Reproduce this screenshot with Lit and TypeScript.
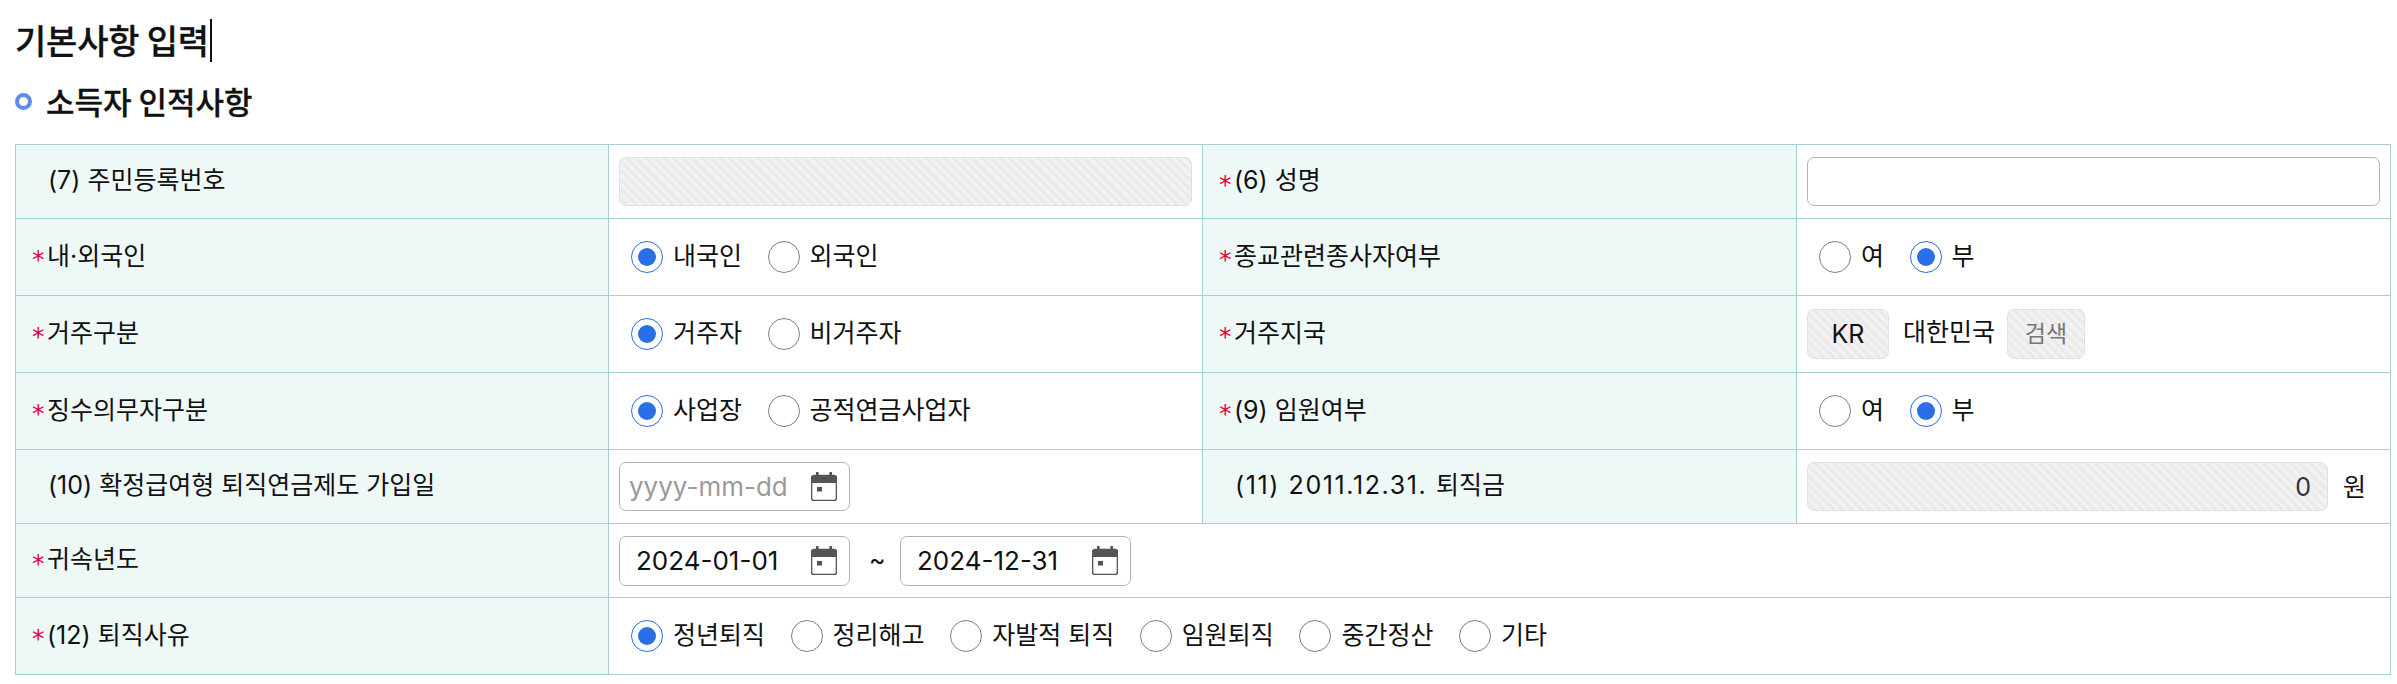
import { LitElement, html, css } from "lit";
import { customElement } from "lit/decorators.js";

type Opt = [string, boolean];

@customElement("app-root")
export class AppRoot extends LitElement {
  static styles = css`
    :host { display: block; width: 2397px; height: 684px; background: #fff; overflow: hidden; color: #111;
      font-family: "Inter", "Noto Sans CJK KR", sans-serif; font-size: 25px; line-height: 34px; box-sizing: border-box; padding: 18px 0 0 15px; }
    * { box-sizing: border-box; }
    .title { display: flex; align-items: center; height: 44px; font-size: 34px; line-height: 44px; color: #111; letter-spacing: -0.2px; font-family: "Noto Sans CJK KR", sans-serif; font-weight: 500; -webkit-text-stroke: 0.3px #111; }
    .caret { width: 2px; height: 43px; background: #111; margin-left: 1px; }
    .section { display: flex; align-items: center; gap: 14px; height: 40px; margin-top: 19px; margin-bottom: 23px; font-size: 31px; line-height: 40px; color: #111; font-family: "Noto Sans CJK KR", sans-serif; font-weight: 500; -webkit-text-stroke: 0.3px #111; }
    .bullet { width: 17px; height: 17px; border-radius: 50%; border: 4.5px solid #5b8def; flex: none; }
    .grid { display: grid; width: 2376px; grid-template-columns: 593px 594px 594px 594px;
      grid-template-rows: 74px 77px 77px 77px 74px 74px 77px; border-top: 1px solid #a8cfd5; border-left: 1px solid #a8cfd5; }
    .th, .td { display: flex; align-items: center; border-right: 1px solid #a8cfd5; border-bottom: 1px solid #a8cfd5; white-space: nowrap; }
    .th { background: #eef8f6; padding: 0 0 3px 32px; }
    .th.req { padding-left: 16px; }
    .star { width: 15px; color: #e8003d; font-family: "DejaVu Sans", sans-serif; font-size: 25px; line-height: 1; padding-top: 8px; flex: none; }
    .spaced { letter-spacing: 1.6px; white-space: pre; }
    .td { padding: 0 10px 0 10px; }
    .wide { grid-column: 2 / 5; }
    .radios { display: flex; align-items: center; gap: 25.6px; padding-left: 12px; }
    .radio { display: flex; align-items: center; gap: 10px; }
    .radio-text { padding-bottom: 2px; }
    .dot { width: 32px; height: 32px; border-radius: 50%; border: 1.5px solid #808080; background: #fff; flex: none; display: flex; align-items: center; justify-content: center; }
    .dot.on { border-color: #2a6fe8; }
    .dot.on::after { content: ""; width: 18px; height: 18px; border-radius: 50%; background: #2a6fe8; }
    .input { height: 49px; border: 1px solid #b5b5b5; border-radius: 7px; background: #fff; display: flex; align-items: center; }
    .full { flex: 1; }
    .hatch { border-color: #e0e0e6; background: repeating-linear-gradient(45deg, #f2f2f2 0 3.3px, #ecebec 3.3px 6.6px); }
    .num { justify-content: flex-end; padding-right: 16px; color: #333; }
    .unit { margin-left: 15px; margin-right: 14px; color: #111; }
    .kr { width: 82px; height: 50px; justify-content: center; }
    .name { margin-left: 14px; padding-bottom: 4px; }
    .btn { width: 78px; height: 50px; justify-content: center; margin-left: 12px; color: #777; font-size: 23px; }
    .date { width: 231px; padding: 0 12px 0 9px; justify-content: space-between; font-size: 26px; }
    .date.val { height: 50px; padding-left: 16px; color: #111; }
    .ph { color: #9a9a9a; }
    .tilde { margin: 0 23px 0 19px; width: 8px; text-align: center; line-height: 1; }
    svg { display: block; flex: none; }
  `;

  private label(text: string, req = false) {
    return html`<div class="th ${req ? "req" : ""}">${req ? html`<span class="star">*</span>` : ""}<span>${text}</span></div>`;
  }

  private radio([t, on]: Opt) {
    return html`<div class="radio"><span class="dot ${on ? "on" : ""}"></span><span class="radio-text">${t}</span></div>`;
  }

  private radios(opts: Opt[], wide = false) {
    return html`<div class="td ${wide ? "wide" : ""}"><div class="radios">${opts.map((o) => this.radio(o))}</div></div>`;
  }

  private cal() {
    return html`<svg width="26" height="29" viewBox="0 0 26 29" fill="none">
      <rect x="5" y="0" width="2.6" height="6" fill="#555"/><rect x="18.4" y="0" width="2.6" height="6" fill="#555"/>
      <path d="M3 3.5h20a2.5 2.5 0 0 1 2.5 2.5v20a2.5 2.5 0 0 1-2.5 2.5H3A2.5 2.5 0 0 1 .5 26V6A2.5 2.5 0 0 1 3 3.5z" stroke="#555" stroke-width="1.6" fill="#fff"/>
      <path d="M.5 6A2.5 2.5 0 0 1 3 3.5h20A2.5 2.5 0 0 1 25.5 6v5H.5z" fill="#555"/>
      <rect x="6" y="15" width="5" height="4.5" fill="#555"/>
    </svg>`;
  }

  private date(v: string | null) {
    return html`<div class="input date ${v ? "val" : ""}"><span class="${v ? "" : "ph"}">${v ?? "yyyy-mm-dd"}</span>${this.cal()}</div>`;
  }

  render() {
    return html`
      <div class="title"><span>기본사항 입력</span><span class="caret"></span></div>
      <div class="section"><span class="bullet"></span><span>소득자 인적사항</span></div>
      <div class="grid">
        ${this.label("(7) 주민등록번호")}
        <div class="td"><div class="input full hatch"></div></div>
        ${this.label("(6) 성명", true)}
        <div class="td"><div class="input full"></div></div>

        ${this.label("내·외국인", true)}
        ${this.radios([["내국인", true], ["외국인", false]])}
        ${this.label("종교관련종사자여부", true)}
        ${this.radios([["여", false], ["부", true]])}

        ${this.label("거주구분", true)}
        ${this.radios([["거주자", true], ["비거주자", false]])}
        ${this.label("거주지국", true)}
        <div class="td"><div class="input hatch kr">KR</div><span class="name">대한민국</span><div class="input hatch btn">검색</div></div>

        ${this.label("징수의무자구분", true)}
        ${this.radios([["사업장", true], ["공적연금사업자", false]])}
        ${this.label("(9) 임원여부", true)}
        ${this.radios([["여", false], ["부", true]])}

        ${this.label("(10) 확정급여형 퇴직연금제도 가입일")}
        <div class="td">${this.date(null)}</div>
        <div class="th"><span class="spaced">(11) 2011.12.31. </span><span>퇴직금</span></div>
        <div class="td"><div class="input full hatch num">0</div><span class="unit">원</span></div>

        ${this.label("귀속년도", true)}
        <div class="td wide">${this.date("2024-01-01")}<span class="tilde">~</span>${this.date("2024-12-31")}</div>

        ${this.label("(12) 퇴직사유", true)}
        ${this.radios([["정년퇴직", true], ["정리해고", false], ["자발적 퇴직", false], ["임원퇴직", false], ["중간정산", false], ["기타", false]], true)}
      </div>
    `;
  }
}
